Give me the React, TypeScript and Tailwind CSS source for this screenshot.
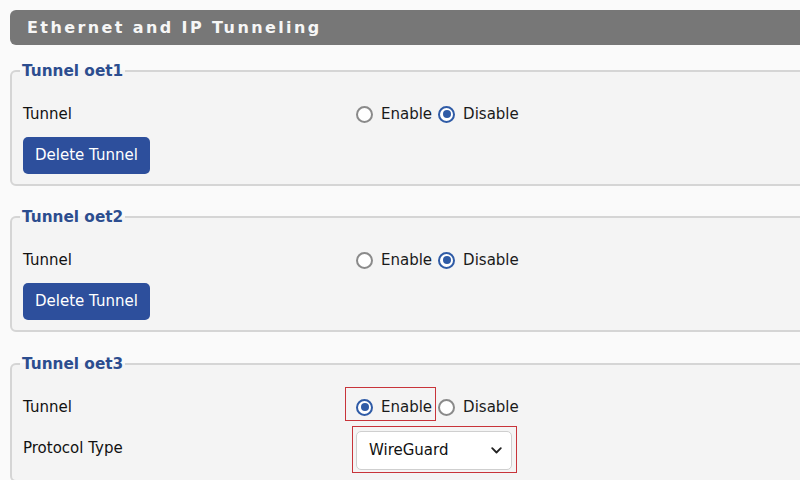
import type { ReactNode } from 'react'

const font = { fontFamily: '"DejaVu Sans", Verdana, sans-serif' }

function Radio({ checked }: { checked: boolean }) {
  return checked ? (
    <span className="flex h-[17px] w-[17px] items-center justify-center rounded-full border-[2px] border-[#2f5ba6] bg-white">
      <span className="h-[8px] w-[8px] rounded-full bg-[#2f5ba6]" />
    </span>
  ) : (
    <span className="h-[17px] w-[17px] rounded-full border-[2px] border-[#8a8a8a] bg-white" />
  )
}

function TunnelToggle({ enabled, highlight }: { enabled: boolean; highlight?: boolean }) {
  return (
    <div className="flex items-center text-[15px] text-[#1a1a1a]">
      <span className="relative flex items-center">
        <Radio checked={enabled} />
        <span className="ml-[8px]">Enable</span>
        {highlight && (
          <span className="absolute left-[-11px] top-[-9px] h-[34px] w-[91px] border-[1.5px] border-[#c8343a]" />
        )}
      </span>
      <span className="ml-[6px] flex items-center">
        <Radio checked={!enabled} />
        <span className="ml-[8px]">Disable</span>
      </span>
    </div>
  )
}

function Row({ label, children }: { label: string; children: ReactNode }) {
  return (
    <div className="flex h-[34px] items-center">
      <div className="w-[333px] text-[15px] text-[#111]">{label}</div>
      {children}
    </div>
  )
}

function DeleteButton() {
  return (
    <button className="mt-[6px] h-[37px] w-[127px] rounded-[5px] bg-[#2d4f9c] text-[15px] text-white">
      Delete Tunnel
    </button>
  )
}

function TunnelSet({ name, children, className }: { name: string; children: ReactNode; className?: string }) {
  return (
    <fieldset
      className={`ml-[10px] w-[830px] rounded-[6px] border-2 border-[#d5d5d5] bg-[#f4f4f4] px-[11px] pb-[10px] pt-[16px] ${className ?? ''}`}
    >
      <legend className="-ml-[3px] px-[2px] text-[15.3px] font-bold leading-[20px] text-[#2c4d8f]">{name}</legend>
      {children}
    </fieldset>
  )
}

export default function App() {
  return (
    <div className="h-[480px] w-[800px] overflow-hidden bg-[#fafafa] pt-[10px]" style={font}>
      <div className="ml-[10px] flex h-[35px] w-[830px] items-center rounded-l-[6px] bg-[#777777] pl-[17px]">
        <span className="mt-[1px] text-[16px] font-bold tracking-[2.4px] text-[#f6f6f6]">Ethernet and IP Tunneling</span>
      </div>

      <TunnelSet name="Tunnel oet1" className="mt-[16px]">
        <Row label="Tunnel">
          <TunnelToggle enabled={false} />
        </Row>
        <DeleteButton />
      </TunnelSet>

      <TunnelSet name="Tunnel oet2" className="mt-[21px]">
        <Row label="Tunnel">
          <TunnelToggle enabled={false} />
        </Row>
        <DeleteButton />
      </TunnelSet>

      <TunnelSet name="Tunnel oet3" className="mt-[22px]">
        <Row label="Tunnel">
          <TunnelToggle enabled highlight />
        </Row>
        <div className="mt-[7px] flex h-[39px] items-center">
          <div className="w-[333px] pb-[4px] text-[15px] text-[#111]">Protocol Type</div>
          <div className="relative">
            <div className="flex h-[39px] w-[156px] items-center justify-between rounded-[5px] border border-[#cfcfcf] bg-white pl-[12px] pr-[9px] text-[15px] text-[#111]">
              <span>WireGuard</span>
              <svg width="11" height="7" viewBox="0 0 11 7" fill="none">
                <path d="M1.2 1.2 L5.5 5.5 L9.8 1.2" stroke="#222" strokeWidth="1.8" strokeLinecap="round" strokeLinejoin="round" />
              </svg>
            </div>
            <span className="absolute left-[-4px] top-[-5px] h-[47px] w-[165px] border-[1.5px] border-[#c8343a]" />
          </div>
        </div>
      </TunnelSet>
    </div>
  )
}
